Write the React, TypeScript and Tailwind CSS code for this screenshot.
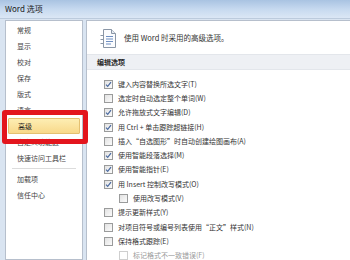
import React from 'react';

const font = { fontFamily: '"Noto Sans CJK SC", "Liberation Sans", sans-serif' };

const navItems = ['常规', '显示', '校对', '保存', '版式', '语言', '高级', '自定义功能区', '快速访问工具栏'];
const navExtra = ['加载项', '信任中心'];

type Row = { label: string; checked: boolean; indent?: boolean; disabled?: boolean };

const rows: Row[] = [
  { label: '键入内容替换所选文字(T)', checked: true },
  { label: '选定时自动选定整个单词(W)', checked: false },
  { label: '允许拖放式文字编辑(D)', checked: true },
  { label: '用 Ctrl + 单击跟踪超链接(H)', checked: true },
  { label: '插入“自选图形”时自动创建绘图画布(A)', checked: false },
  { label: '使用智能段落选择(M)', checked: true },
  { label: '使用智能指针(E)', checked: true },
  { label: '用 Insert 控制改写模式(O)', checked: true },
  { label: '使用改写模式(V)', checked: false, indent: true },
  { label: '提示更新样式(Y)', checked: false },
  { label: '对项目符号或编号列表使用“正文”样式(N)', checked: false },
  { label: '保持格式跟踪(E)', checked: false },
  { label: '标记格式不一致错误(F)', checked: false, indent: true, disabled: true },
];

function Checkbox({ checked, disabled }: { checked: boolean; disabled?: boolean }) {
  return (
    <span
      className={`flex items-center justify-center w-[9px] h-[9px] border shrink-0 ${
        disabled ? 'border-[#cfcfcf] bg-white' : 'border-[#9a9b9b] bg-gradient-to-br from-[#e2e2e2] to-[#fbfbfb]'
      }`}
    >
      {checked && (
        <svg width="7" height="7" viewBox="0 0 7 7">
          <path d="M1 3.6 L2.7 5.4 L6 1.2" fill="none" stroke="#4a6aa0" strokeWidth="1.2" />
        </svg>
      )}
    </span>
  );
}

function DocIcon() {
  return (
    <svg width="18" height="19" viewBox="0 0 18 19">
      <path d="M3.5 0.5 H11.5 L15.5 4.5 V18.5 H3.5 Z" fill="#fbfcfe" stroke="#8a96a6" />
      <path d="M11.5 0.5 V4.5 H15.5" fill="#e6ebf2" stroke="#8a96a6" />
      <path d="M0.5 6.5 H3.5 M0.5 10.5 H3.5 M0.5 14.5 H3.5" stroke="#8a96a6" />
      <path d="M6 7.5 H13 M6 10 H13 M6 12.5 H13 M6 15 H11" stroke="#6e8fc2" />
    </svg>
  );
}

export default function App() {
  return (
    <div className="relative w-[350px] h-[260px] overflow-hidden bg-[#d9e4f1] text-[#1e1e1e]" style={font}>
      {/* Title bar */}
      <div className="h-[19px] flex items-center pl-[5px] bg-gradient-to-b from-[#a9c3e2] via-[#c6d9ef] to-[#dbe7f5] border-b border-[#bccbdd]">
        <span className="text-[8px] leading-none text-[#1a1a1a]">Word 选项</span>
      </div>

      <div className="flex h-[241px] pt-[1px]">
        {/* Left nav */}
        <div className="ml-[5px] w-[78px] bg-white border border-[#b6bfcc] pt-[1px]">
          {navItems.map((item) => (
            <div
              key={item}
              className={`h-[16px] flex items-center mx-[2px] pl-[9px] text-[7px] leading-none ${
                item === '高级'
                  ? 'bg-gradient-to-b from-[#fdeeb3] to-[#f8d98a] border border-[#e4c071] rounded-[1px]'
                  : 'text-[#444]'
              }`}
            >
              {item}
            </div>
          ))}
          <div className="mx-[6px] my-[2px] border-t border-[#dcdcdc]" />
          {navExtra.map((item) => (
            <div key={item} className="h-[16px] flex items-center mx-[2px] pl-[9px] text-[7px] leading-none text-[#444]">
              {item}
            </div>
          ))}
        </div>

        {/* Right content */}
        <div className="ml-[3px] flex-1 bg-white border-t border-l border-[#b6bfcc]">
          <div className="h-[33px] flex items-center pl-[13px] pt-[1px]">
            <DocIcon />
            <span className="ml-[6px] text-[7.5px] leading-none text-[#333]">使用 Word 时采用的高级选项。</span>
          </div>
          <div className="h-[16px] flex items-center pl-[10px] bg-[#eef0f4] border-y border-[#e3e6eb]">
            <span className="text-[7px] leading-none font-bold text-[#2a2a2a]">编辑选项</span>
          </div>
          <div className="pt-[7px]">
            {rows.map((r, i) => (
              <div
                key={i}
                className={`h-[14.3px] flex items-center gap-[5px] ${r.indent ? 'pl-[32px]' : 'pl-[17px]'}`}
              >
                <Checkbox checked={r.checked} disabled={r.disabled} />
                <span className={`text-[7px] leading-none whitespace-nowrap ${r.disabled ? 'text-[#9a9a9a]' : 'text-[#333]'}`}>
                  {r.label}
                </span>
              </div>
            ))}
          </div>
        </div>
      </div>

      {/* Red annotation box */}
      <div className="absolute left-[2px] top-[110px] w-[86px] h-[34px] border-[5px] border-[#e3151d] rounded-[3px]" />
    </div>
  );
}
